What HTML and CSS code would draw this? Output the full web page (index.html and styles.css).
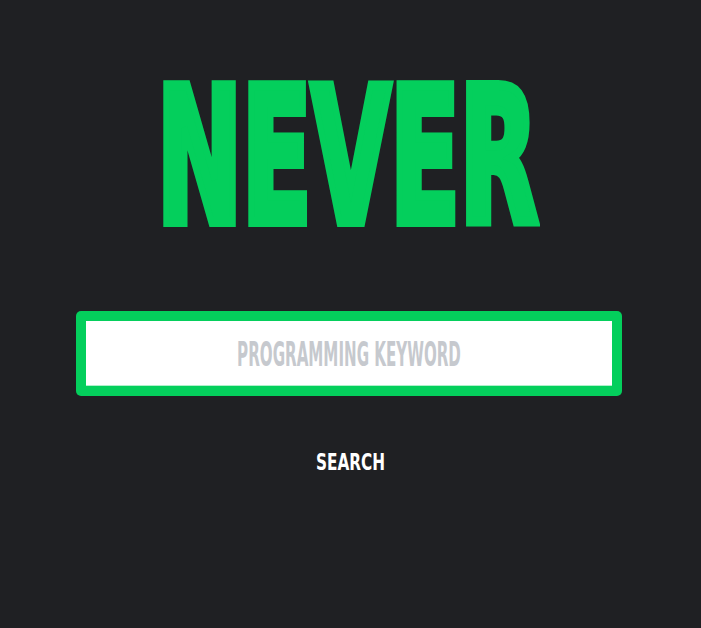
FILE: index.html
```html
<!DOCTYPE html>
<html lang="en">
<head>
<meta charset="utf-8">
<title>Never</title>
<link rel="stylesheet" href="styles.css">
</head>
<body>
<main class="page">
  <div class="logo-wrap"><h1 class="logo">NEVER</h1></div>
  <form class="search-form">
    <div class="field">
      <input class="field-input" type="text" placeholder="PROGRAMMING KEYWORD">
    </div>
    <button class="search-btn" type="button"><span class="search-label">SEARCH</span></button>
  </form>
</main>
</body>
</html>
```

FILE: styles.css
```css
html, body {
  margin: 0;
  padding: 0;
  background: #1f2023;
  height: 100%;
}
.page {
  display: flex;
  flex-direction: column;
  align-items: center;
  padding-top: 64px;
}
.logo-wrap {
  height: 187px;
  display: flex;
  justify-content: center;
}
.logo {
  margin: 0 6px 0 0;
  font-family: "DejaVu Sans Condensed", "DejaVu Sans", sans-serif;
  font-stretch: condensed;
  font-weight: 700;
  font-size: 113px;
  line-height: 1;
  color: #04cf5c;
  -webkit-text-stroke: 6px #04cf5c;
  transform: scaleY(1.663);
  transform-origin: center top;
}
.search-form {
  display: flex;
  flex-direction: column;
  align-items: center;
  margin-top: 60px;
}
.field {
  width: 526px;
  height: 65px;
  padding: 10px;
  margin-right: 3px;
  background: #04cf5c;
  border-radius: 5px;
}
.field-input {
  display: block;
  box-sizing: border-box;
  width: 100%;
  height: 33.2px;
  margin: 0;
  padding: 1px 0 0;
  border: 0;
  outline: none;
  background: #fff;
  text-align: center;
  font-family: "DejaVu Sans Condensed", "DejaVu Sans", sans-serif;
  font-stretch: condensed;
  font-weight: 700;
  font-size: 16.8px;
  color: #333;
  transform: scaleY(1.96);
  transform-origin: center top;
}
.field-input::placeholder {
  color: #c6c9ce;
}
.search-btn {
  margin-top: 58px;
  background: none;
  border: 0;
  padding: 0;
  cursor: pointer;
}
.search-label {
  display: block;
  font-family: "DejaVu Sans Condensed", "DejaVu Sans", sans-serif;
  font-stretch: condensed;
  font-weight: 700;
  font-size: 17px;
  line-height: 1;
  color: #fff;
  transform: scaleY(1.37);
}
```
